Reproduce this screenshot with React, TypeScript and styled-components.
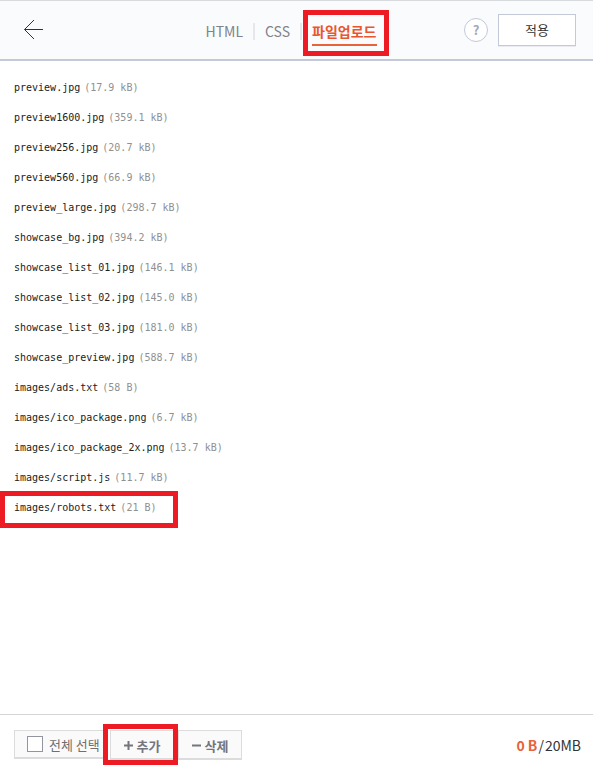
import React from "react";
import styled, { createGlobalStyle, css } from "styled-components";

const GlobalStyle = createGlobalStyle`
  *, *::before, *::after { box-sizing: border-box; }
  body {
    margin: 0;
    background: #fff;
    color: #333;
    font-family: "Noto Sans CJK KR", "Noto Sans", sans-serif;
  }
  button, input { font-family: inherit; margin: 0; }
`;

const Page = styled.div`
  display: flex;
  flex-direction: column;
  min-height: 100vh;
`;

const Header = styled.header`
  display: grid;
  grid-template-columns: 1fr auto 1fr;
  align-items: center;
  padding: 0 17px 0 22px;
  border-top: 1px solid #d9dadd;
  border-bottom: 2px solid #c3c9d7;
  background: #fafbfd;
  min-height: 61px;
`;

const BackButton = styled.button`
  display: flex;
  justify-self: start;
  padding: 0;
  border: 0;
  background: none;
  cursor: pointer;
`;

const Tabs = styled.nav`
  display: flex;
  align-items: center;
  margin: 2px 16px 0 0;
`;

const marked = css`
  position: relative;
  &::after {
    content: "";
    position: absolute;
    border: 5px solid #ed1c24;
    pointer-events: none;
  }
`;

const Tab = styled.a<{ $active?: boolean }>`
  padding: 3px 0 1px;
  border-bottom: 2px solid ${(p) => (p.$active ? "#e8623a" : "transparent")};
  color: ${(p) => (p.$active ? "#e8562f" : "#80848a")};
  font-size: 14px;
  font-weight: ${(p) => (p.$active ? 700 : 400)};
  line-height: 24px;
  text-decoration: none;
  white-space: nowrap;
  ${(p) => p.$active && marked}
  &::after {
    inset: -6px -12px -12px -9px;
  }
`;

const TabDivider = styled.span`
  width: 2px;
  height: 17px;
  margin: 0 10px;
  background: #e6e8ee;
`;

const Actions = styled.div`
  display: flex;
  align-items: center;
  justify-self: end;
  gap: 10px;
`;

const HelpButton = styled.button`
  width: 24px;
  height: 24px;
  padding: 0;
  border: 1px solid #c3c9d7;
  border-radius: 50%;
  background: #fff;
  color: #a3a9b9;
  font-size: 13px;
  font-weight: 700;
  line-height: 20px;
`;

const ApplyButton = styled.button`
  width: 78px;
  height: 32px;
  padding: 0 0 2px;
  border: 1px solid #c3c9d7;
  background: #fff;
  box-shadow: 0 1px 0 #e9ebf0;
  color: #333;
  font-size: 13px;
`;

const FileList = styled.ul`
  flex: 1;
  margin: 0;
  padding: 11px 14px;
  list-style: none;
`;

const FileRow = styled.li<{ $marked?: boolean }>`
  display: flex;
  align-items: center;
  gap: 4px;
  width: fit-content;
  height: 30px;
  font-family: "DejaVu Sans Mono", monospace;
  font-size: 10px;
  color: #222;
  white-space: nowrap;
  ${(p) => p.$marked && marked}
  &::after {
    inset: -1px -21px -6px -14px;
  }
`;

const FileSize = styled.span`
  color: #909090;
`;

const Footer = styled.footer`
  display: flex;
  align-items: flex-start;
  justify-content: space-between;
  min-height: 57px;
  padding: 15px 12px 10px 14px;
  border-top: 1px solid #d5d5d5;
`;

const Tools = styled.div`
  display: flex;
  gap: 4px;
`;

const SelectAll = styled.label`
  display: flex;
  align-items: center;
  gap: 6px;
  width: 92px;
  height: 29px;
  padding-left: 12px;
  border: 1px solid #dcdcdc;
  border-bottom-width: 2px;
  background: #fafafa;
  color: #707070;
  font-size: 13px;
  white-space: nowrap;
`;

const Checkbox = styled.input`
  appearance: none;
  width: 16px;
  height: 16px;
  flex: none;
  border: 1px solid #9295a0;
  background: #fff;
  &:checked { background: #9295a0; }
`;

const ToolButton = styled.button<{ $marked?: boolean }>`
  display: flex;
  align-items: center;
  justify-content: center;
  gap: 4px;
  width: 64px;
  height: 30px;
  padding: 2px 0 0;
  border: 1px solid #dcdcdc;
  border-bottom-width: 2px;
  background: #fafafa;
  color: #74757d;
  font-size: 13px;
  font-weight: 700;
  white-space: nowrap;
  ${(p) => p.$marked && marked}
  &::after {
    inset: -7px -5px -7px -8px;
  }
`;

const Usage = styled.div`
  display: flex;
  gap: 1px;
  color: #333;
  font-size: 14px;
  line-height: 30px;
  white-space: nowrap;
`;

const Used = styled.strong`
  color: #e8623a;
  font-weight: 700;
`;

const files = [
  ["preview.jpg", "17.9 kB"],
  ["preview1600.jpg", "359.1 kB"],
  ["preview256.jpg", "20.7 kB"],
  ["preview560.jpg", "66.9 kB"],
  ["preview_large.jpg", "298.7 kB"],
  ["showcase_bg.jpg", "394.2 kB"],
  ["showcase_list_01.jpg", "146.1 kB"],
  ["showcase_list_02.jpg", "145.0 kB"],
  ["showcase_list_03.jpg", "181.0 kB"],
  ["showcase_preview.jpg", "588.7 kB"],
  ["images/ads.txt", "58 B"],
  ["images/ico_package.png", "6.7 kB"],
  ["images/ico_package_2x.png", "13.7 kB"],
  ["images/script.js", "11.7 kB"],
  ["images/robots.txt", "21 B"],
];

export default function App() {
  return (
    <Page>
      <GlobalStyle />
      <Header>
        <BackButton type="button" aria-label="뒤로">
          <svg width="22" height="22" viewBox="0 0 22 22" fill="none" stroke="#333">
            <path d="M2.5 10.5H21M12 1L2.5 10.5L12 20" />
          </svg>
        </BackButton>
        <Tabs>
          <Tab href="#html">HTML</Tab>
          <TabDivider />
          <Tab href="#css">CSS</Tab>
          <TabDivider />
          <Tab href="#files" $active aria-current="page">파일업로드</Tab>
        </Tabs>
        <Actions>
          <HelpButton type="button">?</HelpButton>
          <ApplyButton type="button">적용</ApplyButton>
        </Actions>
      </Header>
      <FileList>
        {files.map(([name, size]) => (
          <FileRow key={name} $marked={name === "images/robots.txt"}>
            <span>{name}</span>
            <FileSize>({size})</FileSize>
          </FileRow>
        ))}
      </FileList>
      <Footer>
        <Tools>
          <SelectAll>
            <Checkbox type="checkbox" />
            전체 선택
          </SelectAll>
          <ToolButton type="button" $marked>
            <svg width="9" height="9" viewBox="0 0 9 9" stroke="#74757d" strokeWidth="2">
              <path d="M0 4.5H9M4.5 0V9" />
            </svg>
            추가
          </ToolButton>
          <ToolButton type="button">
            <svg width="9" height="9" viewBox="0 0 9 9" stroke="#74757d" strokeWidth="2">
              <path d="M0 4.5H9" />
            </svg>
            삭제
          </ToolButton>
        </Tools>
        <Usage>
          <Used>0 B</Used>
          <span>/</span>
          <span>20MB</span>
        </Usage>
      </Footer>
    </Page>
  );
}
